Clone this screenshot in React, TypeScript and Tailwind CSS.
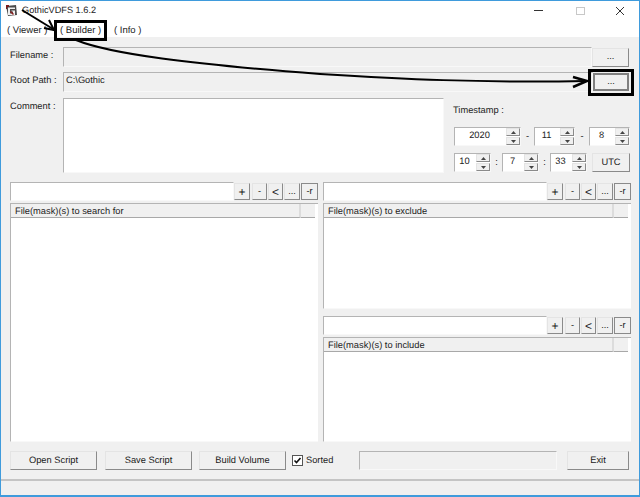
import type { ReactNode } from 'react';

const RAISED =
  'flex items-center justify-center border border-t-[#e4e4e4] border-l-[#e4e4e4] border-r-[#8a8a8a] border-b-[#8a8a8a] bg-[#f0f0f0] text-[#1a1a1a]';
const SUNKEN = 'border border-t-[#b4b4b4] border-l-[#b4b4b4] border-r-[#f8f8f8] border-b-[#f8f8f8]';

function Btn({ className, children }: { className: string; children: ReactNode }) {
  return <div className={`${RAISED} ${className}`}>{children}</div>;
}

function Arrow({ up }: { up?: boolean }) {
  return (
    <svg width="5" height="3" viewBox="0 0 5 3">
      <path d={up ? 'M2.5 0L5 3H0z' : 'M0 0H5L2.5 3z'} fill="#444" />
    </svg>
  );
}

function Spinner({ value, width }: { value: string; width: string }) {
  return (
    <div className={`flex h-[19px] bg-white ${SUNKEN} ${width}`}>
      <div className="flex-1 pr-[2px] text-center leading-[15px]">{value}</div>
      <div className="flex w-[14px] flex-col gap-px bg-white">
        <div className={`${RAISED} h-[8px] w-full`}>
          <Arrow up />
        </div>
        <div className={`${RAISED} h-[8px] w-full`}>
          <Arrow />
        </div>
      </div>
    </div>
  );
}

function Toolbar() {
  return (
    <div className="flex h-[19px] shrink-0 items-stretch">
      <div className={`w-[224px] bg-white ${SUNKEN}`} />
      <div className="flex items-stretch py-px">
        <Btn className="w-[16px] text-[12px]">+</Btn>
        <Btn className="ml-[2px] w-[15px]">-</Btn>
        <Btn className="ml-px w-[15px] text-[12px]">&lt;</Btn>
        <Btn className="ml-px w-[16px]">...</Btn>
        <div className="ml-px flex w-[17px] items-center justify-center border border-[#8a8a8a] bg-[#f0f0f0]">-r</div>
      </div>
    </div>
  );
}

function MaskList({ title }: { title: string }) {
  return (
    <div className={`mt-[2px] flex min-h-0 flex-1 flex-col bg-white ${SUNKEN} border-r-0`}>
      <div className="flex h-[14px] shrink-0 pr-[3px] leading-[15px]">
        <div className="flex-1 border-r-2 border-b border-r-[#dcdcdc] border-b-[#a8a8a8] bg-[#f0f0f0] pl-[4px]">{title}</div>
        <div className="w-[14px] border-b border-b-[#a8a8a8] bg-[#f0f0f0]" />
      </div>
    </div>
  );
}

function Panel({ title, className }: { title: string; className: string }) {
  return (
    <div className={`flex w-[308px] flex-col ${className}`}>
      <Toolbar />
      <MaskList title={title} />
    </div>
  );
}

function AppIcon() {
  return (
    <svg width="13" height="13" viewBox="0 0 13 13">
      <path d="M1 2L11 1L12 11L3 12z" fill="#4a4a4a" />
      <path d="M3 3.5H10V5H5V9.5H8V7.5H6.5V6.5H10V11H3z" fill="#eeeeee" />
      <path d="M6 7L9 10L8 11L5 8z" fill="#8c1f1f" />
      <path d="M1 1H4V3H2V5H1z" fill="#7a1a1a" />
    </svg>
  );
}

export default function App() {
  return (
    <div className="relative flex h-[497px] w-[640px] flex-col overflow-hidden whitespace-nowrap border border-x-[#3f9bdc] border-b-2 border-b-[#3f9bdc] border-t-[#3f9bdc] bg-white font-['Liberation_Sans',Arial,sans-serif] text-[9.3px] text-[#222] [text-rendering:geometricPrecision]">
      <div className="flex h-[19px] shrink-0 items-center pl-[4px]">
        <AppIcon />
        <span className="ml-[4px] pt-px text-[9.2px]">GothicVDFS 1.6.2</span>
        <div className="ml-auto flex items-center">
          <div className="h-px w-[9px] bg-[#333]" />
          <div className="ml-[33px] h-[8px] w-[9px] border border-[#c8c8c8]" />
          <svg className="ml-[30px] mr-[14px]" width="10" height="10" viewBox="0 0 10 10">
            <path d="M1 1L9 9M9 1L1 9" stroke="#333" strokeWidth="1" />
          </svg>
        </div>
      </div>
      <div className="flex h-[17px] shrink-0 items-center pl-[6px] pt-[5px] text-[9.5px]">
        <span className="w-[53px]">( Viewer )</span>
        <span className="w-[54px]">( Builder )</span>
        <span>( Info )</span>
      </div>

      <div className="flex min-h-0 flex-1 flex-col bg-[#f0f0f0] pl-[9px] pt-[10px]">
        <div className="flex h-[20px] shrink-0 items-center">
          <div className="w-[53px] -translate-y-px">Filename :</div>
          <div className={`h-full w-[529px] ${SUNKEN}`} />
          <Btn className="h-[19px] w-[37px]">...</Btn>
        </div>
        <div className="mt-[5px] flex h-[20px] shrink-0 items-center">
          <div className="w-[53px] -translate-y-px">Root Path :</div>
          <div className={`h-full w-[530px] pl-[2px] leading-[15px] ${SUNKEN}`}>C:\Gothic</div>
          <div className="flex h-[18px] w-[36px] items-center justify-center border-2 border-[#808080] bg-[#f0f0f0]">...</div>
        </div>

        <div className="mt-[6px] flex h-[75px] shrink-0">
          <div className="w-[53px] pt-[2px]">Comment :</div>
          <div className={`h-full w-[381px] bg-white ${SUNKEN}`} />
          <div className="ml-[10px] flex flex-col">
            <div className="-ml-px h-[29px] pt-[6px]">Timestamp :</div>
            <div className="flex items-center">
              <Spinner value="2020" width="w-[67px]" />
              <div className="w-[13px] text-center">-</div>
              <Spinner value="11" width="w-[41px]" />
              <div className="w-[14px] text-center">-</div>
              <Spinner value="8" width="w-[41px]" />
            </div>
            <div className="mt-[7px] flex items-center">
              <Spinner value="10" width="w-[37px]" />
              <div className="w-[11px] text-center">:</div>
              <Spinner value="7" width="w-[37px]" />
              <div className="w-[11px] text-center">:</div>
              <Spinner value="33" width="w-[37px]" />
              <Btn className="ml-[5px] h-[19px] w-[38px]">UTC</Btn>
            </div>
          </div>
        </div>

        <div className="mt-[9px] flex h-[260px] shrink-0 gap-[5px]">
          <Panel title="File(mask)(s) to search for" className="h-full" />
          <div className="flex h-full flex-col gap-[7px]">
            <Panel title="File(mask)(s) to exclude" className="h-[127px]" />
            <Panel title="File(mask)(s) to include" className="h-[126px]" />
          </div>
        </div>

        <div className="mt-[9px] flex h-[19px] shrink-0 items-stretch">
          <Btn className="w-[87px]">Open Script</Btn>
          <Btn className="ml-[8px] w-[87px]">Save Script</Btn>
          <Btn className="ml-[7px] w-[87px]">Build Volume</Btn>
          <div className="ml-[6px] flex w-[67px] items-center">
            <div className="flex h-[11px] w-[11px] items-center justify-center border border-[#555] bg-white">
              <svg width="9" height="9" viewBox="0 0 9 9">
                <path d="M1.5 4.5L3.5 6.5L7.5 2" fill="none" stroke="#111" strokeWidth="1.6" />
              </svg>
            </div>
            <span className="ml-[3px]">Sorted</span>
          </div>
          <div className={`w-[198px] ${SUNKEN}`} />
          <Btn className="ml-[10px] w-[62px]">Exit</Btn>
        </div>

        <div className="-ml-[9px] mt-[9px] flex-1 border-t-2 border-t-[#c4c4c4]" />
      </div>

      {/* annotations drawn over the window */}
      <div className="absolute left-[53px] top-[19px] h-[21px] w-[53px] border-[3px] border-black" />
      <div className="absolute left-[587px] top-[68px] h-[27px] w-[46px] border-[3px] border-black" />
      <svg className="pointer-events-none absolute -left-px -top-px" width="640" height="497" viewBox="0 0 640 497" fill="none" stroke="#000">
        <path d="M22 10L53 29" strokeWidth="2" />
        <path d="M44 28L54 30L49 20" strokeWidth="2" />
        <path d="M76 40C110 54 190 64 320 74C400 79 480 83 586 81" strokeWidth="2" />
        <path d="M573 77L587 81L573 87" strokeWidth="2.5" />
      </svg>
    </div>
  );
}
